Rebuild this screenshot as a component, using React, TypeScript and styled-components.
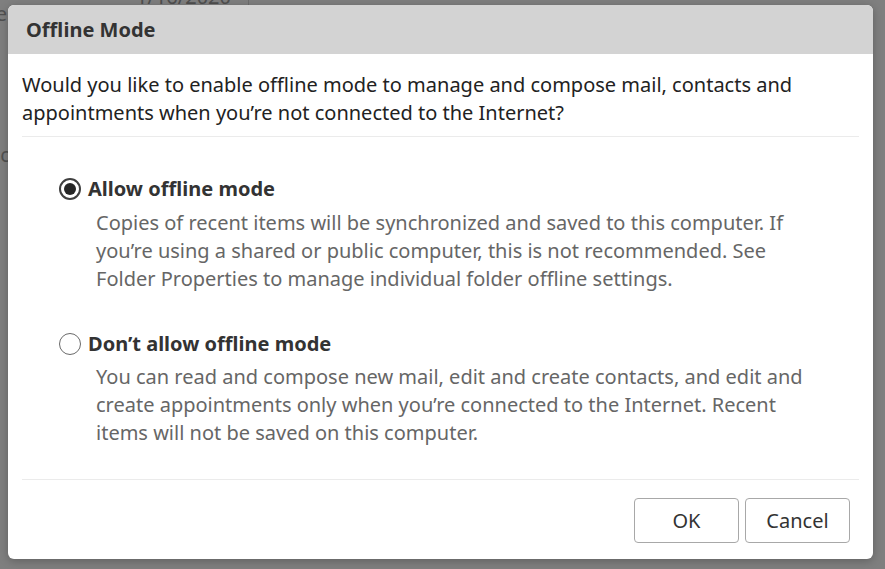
import React, { useState } from "react";
import styled, { createGlobalStyle } from "styled-components";

const GlobalStyle = createGlobalStyle`
  html, body { margin: 0; padding: 0; }
  body {
    font-family: "Noto Sans", "Open Sans", sans-serif;
    background: #7f7f7f;
    overflow: hidden;
  }
  * { box-sizing: border-box; }
`;

const Screen = styled.div`
  position: relative;
  width: 885px;
  height: 569px;
  background: #7f7f7f;
  overflow: hidden;
  font-size: 20px;
`;

/* faded application behind the modal */
const Backdrop = styled.div`
  display: flex;
  height: 100%;
  color: #4d4d4d;
  opacity: 0.9;
`;

const SideList = styled.div`
  display: flex;
  flex-direction: column;
  width: 22px;
  margin-left: -12px;
  padding-top: 0;
  line-height: 20px;
  white-space: nowrap;
  font-size: 20px;
`;

const SideItem = styled.div<{ $mt: number; $tone?: string }>`
  margin-top: ${(p) => p.$mt}px;
  color: ${(p) => p.$tone ?? "#4d4d4d"};
`;

const MainPane = styled.div`
  display: flex;
  align-items: flex-start;
  margin-left: 104px;
`;

const DateCell = styled.div`
  width: 134px;
  margin-top: -13px;
  padding-left: 22px;
  font-size: 20px;
  line-height: 20px;
  color: #4a4a4a;
`;

const ColumnRule = styled.div`
  width: 1px;
  height: 20px;
  background: #6c6c6c;
`;

/* the modal */
const Dialog = styled.div`
  position: absolute;
  left: 8px;
  top: 5px;
  width: 865px;
  height: 554px;
  display: flex;
  flex-direction: column;
  background: #ffffff;
  border-radius: 6px;
  overflow: hidden;
  box-shadow: 0 2px 10px rgba(0, 0, 0, 0.25);
`;

const Header = styled.div`
  height: 49px;
  flex: none;
  display: flex;
  align-items: center;
  padding: 1px 18px 0;
  background: #d3d3d3;
`;

const Title = styled.h1`
  margin: 0;
  font-size: 20px;
  line-height: 28px;
  font-weight: 700;
  color: #333333;
`;

const Body = styled.div`
  flex: 1;
  display: flex;
  flex-direction: column;
  padding: 17px 14px 0;
`;

const Intro = styled.p`
  margin: 0;
  font-size: 20px;
  line-height: 28px;
  color: #222222;
`;

const Divider = styled.div<{ $mt: number }>`
  height: 1px;
  flex: none;
  margin-top: ${(p) => p.$mt}px;
  background: #ebebeb;
`;

const Options = styled.div`
  display: flex;
  flex-direction: column;
  padding: 38px 0 0 37px;
`;

const Option = styled.div<{ $mt: number }>`
  display: flex;
  flex-direction: column;
  margin-top: ${(p) => p.$mt}px;
`;

const OptionRow = styled.label`
  display: flex;
  align-items: center;
  gap: 7px;
  cursor: pointer;
`;

const Radio = styled.span<{ $checked: boolean }>`
  position: relative;
  flex: none;
  width: 22px;
  height: 22px;
  border-radius: 50%;
  border: ${(p) => (p.$checked ? "2px solid #404040" : "1.5px solid #6a6a6a")};
  background: #ffffff;
  &::after {
    content: "";
    position: absolute;
    left: 50%;
    top: 50%;
    width: 12px;
    height: 12px;
    margin: -6px 0 0 -6px;
    border-radius: 50%;
    background: #262626;
    display: ${(p) => (p.$checked ? "block" : "none")};
  }
`;

const OptionLabel = styled.span`
  font-size: 20px;
  line-height: 28px;
  font-weight: 700;
  color: #333333;
`;

const OptionText = styled.p<{ $mt: number }>`
  margin: ${(p) => p.$mt}px 0 0 37px;
  width: 720px;
  font-size: 20px;
  line-height: 28px;
  color: #666666;
`;

const Footer = styled.div`
  flex: none;
  display: flex;
  justify-content: flex-end;
  gap: 6px;
  padding: 18px 23px 16px;
`;

const Button = styled.button`
  width: 105px;
  height: 45px;
  padding: 0;
  border: 1px solid #a8a8a8;
  border-radius: 4px;
  background: #ffffff;
  font-family: "Noto Sans", "Open Sans", sans-serif;
  font-size: 20px;
  color: #333333;
  cursor: pointer;
`;

type Mode = "allow" | "deny";

export default function App() {
  const [mode, setMode] = useState<Mode>("allow");
  return (
    <Screen>
      <GlobalStyle />
      <Backdrop>
        <SideList>
          <SideItem $mt={4}>re</SideItem>
          <SideItem $mt={21}>e</SideItem>
          <SideItem $mt={43} $tone="#8a6a3a">1</SideItem>
          <SideItem $mt={17}>nc</SideItem>
        </SideList>
        <MainPane>
          <DateCell>1/16/2020</DateCell>
          <ColumnRule />
        </MainPane>
      </Backdrop>

      <Dialog role="dialog" aria-labelledby="offline-title">
        <Header>
          <Title id="offline-title">Offline Mode</Title>
        </Header>
        <Body>
          <Intro>
            Would you like to enable offline mode to manage and compose mail, contacts and
            appointments when you’re not connected to the Internet?
          </Intro>
          <Divider $mt={9} />
          <Options>
            <Option $mt={0}>
              <OptionRow onClick={() => setMode("allow")}>
                <Radio $checked={mode === "allow"} />
                <OptionLabel>Allow offline mode</OptionLabel>
              </OptionRow>
              <OptionText $mt={6}>
                Copies of recent items will be synchronized and saved to this computer. If
                you’re using a shared or public computer, this is not recommended. See
                Folder Properties to manage individual folder offline settings.
              </OptionText>
            </Option>
            <Option $mt={37}>
              <OptionRow onClick={() => setMode("deny")}>
                <Radio $checked={mode === "deny"} />
                <OptionLabel>Don’t allow offline mode</OptionLabel>
              </OptionRow>
              <OptionText $mt={5}>
                You can read and compose new mail, edit and create contacts, and edit and
                create appointments only when you’re connected to the Internet. Recent
                items will not be saved on this computer.
              </OptionText>
            </Option>
          </Options>
          <Divider $mt={32} />
        </Body>
        <Footer>
          <Button>OK</Button>
          <Button>Cancel</Button>
        </Footer>
      </Dialog>
    </Screen>
  );
}
